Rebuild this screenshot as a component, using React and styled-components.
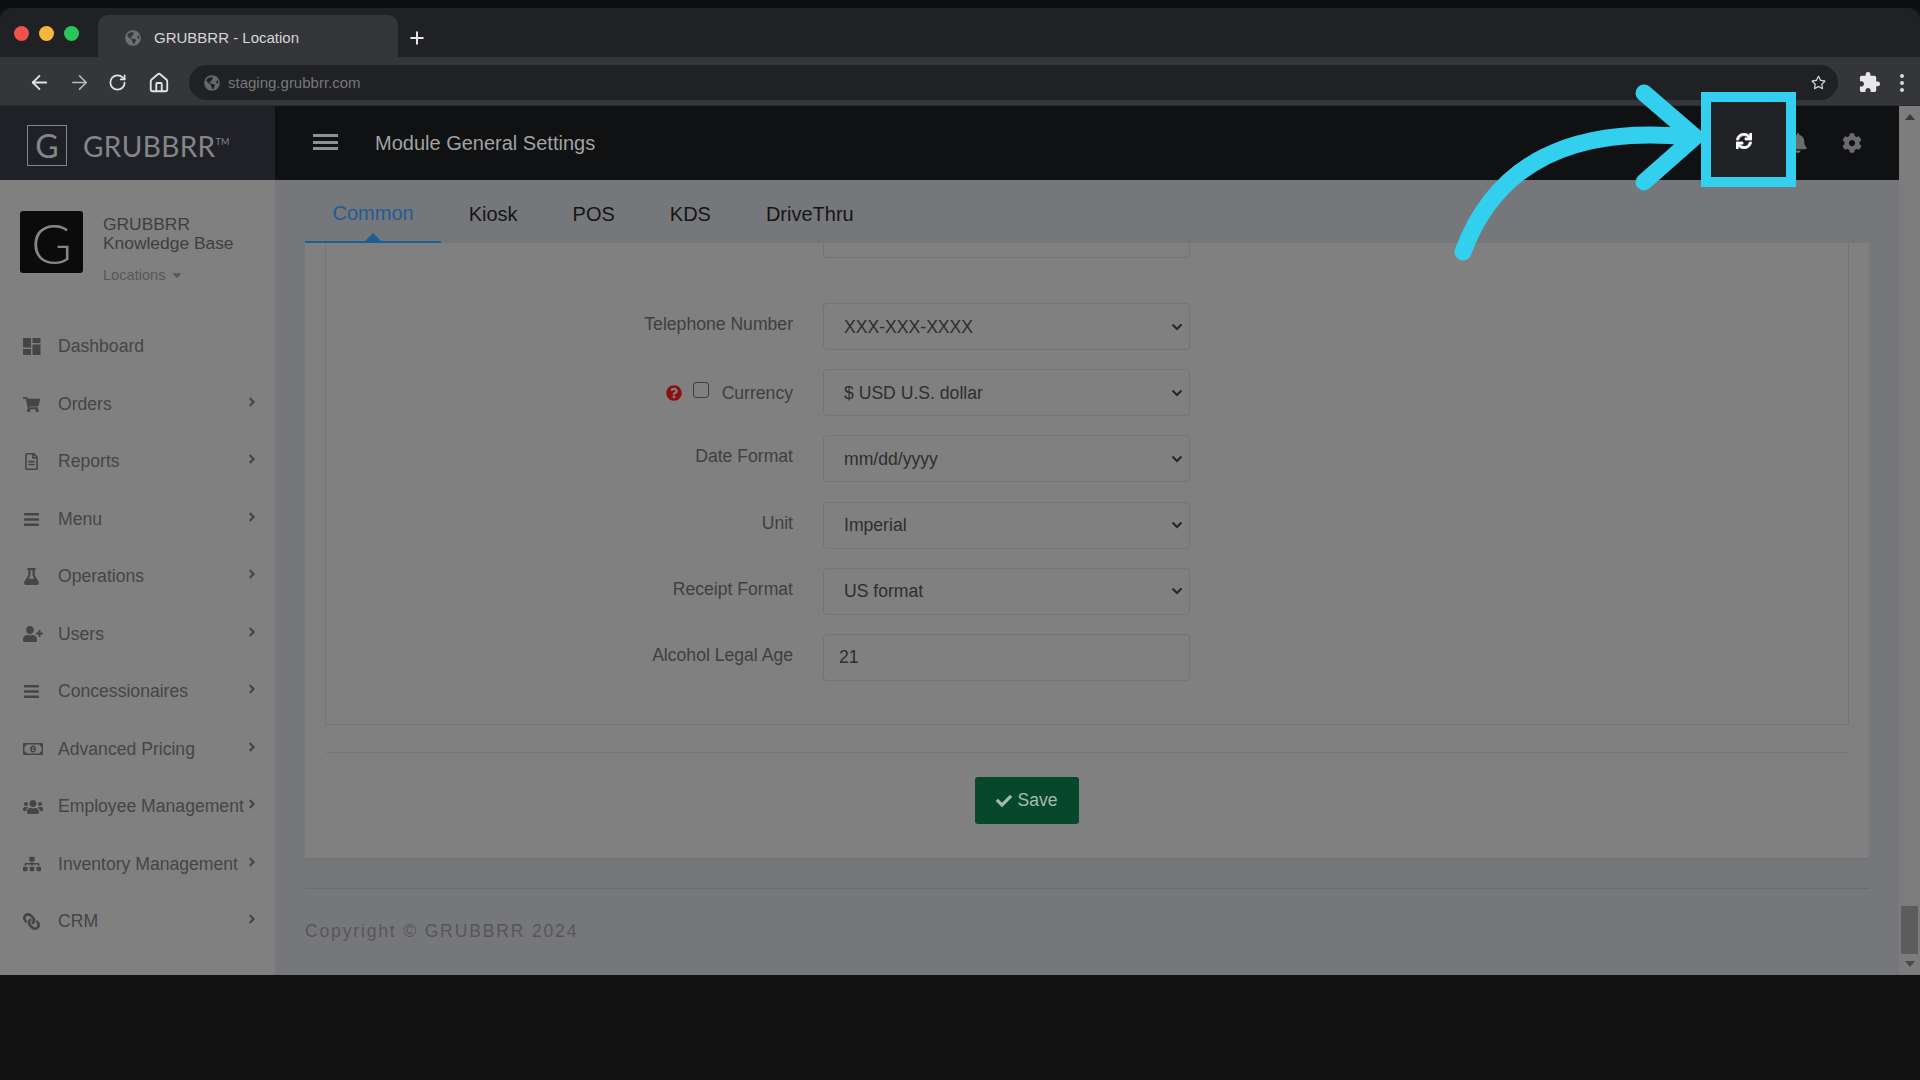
// App.jsx
import React from 'react';
import styled, { createGlobalStyle } from 'styled-components';
import { ArrowLeft, ArrowRight, RotateCw, Home, Plus } from 'lucide-react';
import { MdExtension } from 'react-icons/md';
import {
  FaShoppingCart,
  FaRegFileAlt,
  FaBars,
  FaFlask,
  FaUserPlus,
  FaRegMoneyBillAlt,
  FaUsers,
  FaSitemap,
  FaLink,
  FaAngleRight,
  FaCheck,
  FaQuestionCircle,
  FaSync,
  FaBell,
  FaCog,
  FaRegStar,
  FaGlobeAmericas,
  FaCaretDown,
} from 'react-icons/fa';

const GlobalStyle = createGlobalStyle`
  html, body {
    margin: 0;
    padding: 0;
    background: #111112;
    font-family: "Liberation Sans", Arial, sans-serif;
  }
  * {
    box-sizing: border-box;
  }
`;

const DashboardIcon = () => (
  <svg width="18" height="17" viewBox="0 0 18 17" fill="currentColor">
    <rect x="0" y="0" width="8" height="9.5" />
    <rect x="9.5" y="0" width="8" height="5" />
    <rect x="0" y="11" width="8" height="6" />
    <rect x="9.5" y="6.5" width="8" height="10.5" />
  </svg>
);

const menuItems = [
  { label: 'Dashboard', icon: <DashboardIcon /> },
  { label: 'Orders', icon: <FaShoppingCart size={17} />, more: true },
  { label: 'Reports', icon: <FaRegFileAlt size={17} />, more: true },
  { label: 'Menu', icon: <FaBars size={17} />, more: true },
  { label: 'Operations', icon: <FaFlask size={17} />, more: true },
  { label: 'Users', icon: <FaUserPlus size={20} />, more: true },
  { label: 'Concessionaires', icon: <FaBars size={17} />, more: true },
  { label: 'Advanced Pricing', icon: <FaRegMoneyBillAlt size={20} />, more: true },
  { label: 'Employee Management', icon: <FaUsers size={20} />, more: true },
  { label: 'Inventory Management', icon: <FaSitemap size={18} />, more: true },
  { label: 'CRM', icon: <FlippedLink size={17} />, more: true },
];

const tabs = ['Common', 'Kiosk', 'POS', 'KDS', 'DriveThru'];

const App = () => {
  return (
    <Root>
      <GlobalStyle />
      <TopStrip />

      <TabStrip>
        <TrafficLights>
          <Light color="#ef5350" />
          <Light color="#f6b73c" />
          <Light color="#27c75a" />
        </TrafficLights>
        <BrowserTab>
          <FaGlobeAmericas size={16} color="#6f7073" />
          <span>GRUBBRR - Location</span>
        </BrowserTab>
        <NewTab>
          <Plus size={20} strokeWidth={2.4} />
        </NewTab>
      </TabStrip>

      <Toolbar>
        <NavIcons>
          <ArrowLeft size={23} strokeWidth={1.9} />
          <ArrowRight size={23} strokeWidth={1.7} color="#b9babc" />
          <RotateCw size={19} strokeWidth={2.2} />
          <HomeSlot>
            <Home size={22} strokeWidth={2} />
          </HomeSlot>
        </NavIcons>
        <AddressBar>
          <FaGlobeAmericas size={16} color="#66676a" />
          <AddressText>staging.grubbrr.com</AddressText>
          <FaRegStar size={15} color="#d4d5d6" />
        </AddressBar>
        <Extensions>
          <MdExtension size={23} />
          <Dots>
            <i />
            <i />
            <i />
          </Dots>
        </Extensions>
      </Toolbar>

      <Page>
        <PageBody>
          <Header>
            <LogoArea>
              <LogoBox>G</LogoBox>
              <LogoText>
                GRUBBRR<sup>TM</sup>
              </LogoText>
            </LogoArea>
            <HeaderBar>
              <Hamburger>
                <i />
                <i />
                <i />
              </Hamburger>
              <PageTitle>Module General Settings</PageTitle>
              <HeaderActions>
                <FaBell size={20} />
                <FaCog size={20} />
              </HeaderActions>
            </HeaderBar>
          </Header>

          <Columns>
            <Sidebar>
              <Profile>
                <ProfileLogo>G</ProfileLogo>
                <ProfileInfo>
                  <ProfileName>
                    GRUBBRR
                    <br />
                    Knowledge Base
                  </ProfileName>
                  <Locations>
                    Locations <FaCaretDown size={14} />
                  </Locations>
                </ProfileInfo>
              </Profile>
              <Menu>
                {menuItems.map((item) => (
                  <MenuRow key={item.label}>
                    <MenuIcon>{item.icon}</MenuIcon>
                    <span>{item.label}</span>
                    {item.more && (
                      <MenuMore>
                        <FaAngleRight size={14} />
                      </MenuMore>
                    )}
                  </MenuRow>
                ))}
              </Menu>
            </Sidebar>

            <Main>
              <TabBar>
                {tabs.map((tab, index) => (
                  <TabItem key={tab} $active={index === 0}>
                    {tab}
                  </TabItem>
                ))}
              </TabBar>

              <Card>
                <Fieldset>
                  <CutOffInput />
                  <FormRows>
                    <FormRow>
                      <FieldLabel>Telephone Number</FieldLabel>
                      <Select defaultValue="XXX-XXX-XXXX">
                        <option>XXX-XXX-XXXX</option>
                      </Select>
                    </FormRow>
                    <FormRow>
                      <FieldLabel $low>
                        <FaQuestionCircle size={16} color="#8c0f14" />
                        <Check type="checkbox" />
                        <span>Currency</span>
                      </FieldLabel>
                      <Select defaultValue="$ USD U.S. dollar">
                        <option>$ USD U.S. dollar</option>
                      </Select>
                    </FormRow>
                    <FormRow>
                      <FieldLabel>Date Format</FieldLabel>
                      <Select defaultValue="mm/dd/yyyy">
                        <option>mm/dd/yyyy</option>
                      </Select>
                    </FormRow>
                    <FormRow>
                      <FieldLabel>Unit</FieldLabel>
                      <Select defaultValue="Imperial">
                        <option>Imperial</option>
                      </Select>
                    </FormRow>
                    <FormRow>
                      <FieldLabel>Receipt Format</FieldLabel>
                      <Select defaultValue="US format">
                        <option>US format</option>
                      </Select>
                    </FormRow>
                    <FormRow>
                      <FieldLabel>Alcohol Legal Age</FieldLabel>
                      <TextInput defaultValue="21" />
                    </FormRow>
                  </FormRows>
                </Fieldset>
                <Divider />
                <SaveRow>
                  <SaveButton>
                    <FaCheck size={16} /> Save
                  </SaveButton>
                </SaveRow>
              </Card>

              <Footer>Copyright © GRUBBRR 2024</Footer>
            </Main>
          </Columns>
        </PageBody>

        <Scrollbar>
          <ScrollArrow />
          <ScrollThumb />
          <ScrollArrow $down />
        </Scrollbar>
      </Page>

      <BottomFill />

      <Highlight>
        <RefreshGlyph size={16} />
      </Highlight>
      <CalloutArrow viewBox="0 0 260 190" fill="none">
        <path d="M13 172 C45 85 120 45 240 57" />
        <path d="M194 13 L245 57 L194 102" />
      </CalloutArrow>
    </Root>
  );
};

function FlippedLink({ size }) {
  return (
    <span style={{ display: 'inline-flex', transform: 'scaleX(-1)' }}>
      <FaLink size={size} />
    </span>
  );
}

const Root = styled.div`
  position: relative;
  width: 1920px;
  height: 1080px;
  overflow: hidden;
  display: flex;
  flex-direction: column;
  background: #111112;
`;

const TopStrip = styled.div`
  height: 8px;
  background: #0e0f11;
`;

const TabStrip = styled.div`
  height: 49px;
  background: #202124;
  border-radius: 12px 12px 0 0;
  display: flex;
  align-items: flex-end;
`;

const TrafficLights = styled.div`
  width: 98px;
  height: 100%;
  padding: 18px 0 0 14px;
  display: flex;
  gap: 10px;
`;

const Light = styled.span`
  width: 15px;
  height: 15px;
  border-radius: 50%;
  background: ${(props) => props.color};
`;

const BrowserTab = styled.div`
  width: 300px;
  height: 42px;
  padding: 3px 0 0 27px;
  background: #35363a;
  border-radius: 10px 10px 0 0;
  display: flex;
  align-items: center;
  gap: 13px;
  color: #d6d7d8;
  font-size: 15px;
`;

const NewTab = styled.div`
  width: 38px;
  height: 42px;
  padding-top: 3px;
  color: #e6e6e7;
  display: flex;
  align-items: center;
  justify-content: center;
`;

const Toolbar = styled.div`
  height: 48px;
  padding-top: 8px;
  background: #35363a;
  display: flex;
  align-items: flex-start;
`;

const NavIcons = styled.div`
  width: 189px;
  height: 35px;
  padding: 0 0 0 28px;
  display: flex;
  align-items: center;
  gap: 17px;
  color: #e2e3e4;
`;

const HomeSlot = styled.span`
  margin-left: 4px;
  display: flex;
`;

const AddressBar = styled.div`
  width: 1649px;
  height: 35px;
  padding: 0 12px 0 15px;
  border-radius: 18px;
  background: #202124;
  display: flex;
  align-items: center;
  gap: 8px;
`;

const AddressText = styled.span`
  flex: 1;
  color: #77787b;
  font-size: 15px;
`;

const Extensions = styled.div`
  flex: 1;
  height: 35px;
  padding-left: 20px;
  display: flex;
  align-items: center;
  gap: 19px;
  color: #e8e8e9;
`;

const Dots = styled.div`
  display: flex;
  flex-direction: column;
  gap: 3px;

  i {
    display: block;
    width: 4px;
    height: 4px;
    border-radius: 50%;
    background: #d8d8d9;
  }
`;

const Page = styled.div`
  height: 870px;
  display: flex;
  background: #76777b;
  border-top: 1px solid #2c2d30;
`;

const PageBody = styled.div`
  width: 1899px;
  display: flex;
  flex-direction: column;
`;

const Header = styled.header`
  height: 74px;
  display: flex;
  flex-shrink: 0;
`;

const LogoArea = styled.div`
  width: 275px;
  padding: 5px 0 0 27px;
  background: #1f2126;
  display: flex;
  align-items: center;
  gap: 16px;
`;

const LogoBox = styled.div`
  width: 40px;
  height: 41px;
  border: 1.5px solid #85868a;
  color: #85868a;
  font-family: Lato, sans-serif;
  font-size: 32px;
  display: flex;
  align-items: center;
  justify-content: center;
`;

const LogoText = styled.div`
  color: #85868a;
  font-family: Lato, sans-serif;
  font-size: 28px;
  letter-spacing: 0.4px;

  sup {
    font-size: 9px;
    letter-spacing: 0;
    vertical-align: 12px;
    line-height: 0;
  }
`;

const HeaderBar = styled.div`
  flex: 1;
  padding: 0 37px 0 38px;
  background: #101113;
  display: flex;
  align-items: center;
`;

const Hamburger = styled.div`
  width: 25px;
  display: flex;
  flex-direction: column;
  gap: 3.5px;
  margin-top: -2px;

  i {
    display: block;
    height: 3px;
    background: #8f9092;
  }
`;

const PageTitle = styled.h1`
  margin: 0 0 0 37px;
  color: #a2a2a2;
  font-size: 20px;
  font-weight: 400;
`;

const HeaderActions = styled.div`
  margin-left: auto;
  display: flex;
  align-items: center;
  gap: 34px;
  color: #6c6c6f;
`;

const Columns = styled.div`
  flex: 1;
  display: flex;
  min-height: 0;
`;

const Sidebar = styled.aside`
  width: 275px;
  flex-shrink: 0;
  background: #808080;
`;

const Profile = styled.div`
  height: 138px;
  padding: 31px 0 0 20px;
  display: flex;
  gap: 20px;
`;

const ProfileLogo = styled.div`
  width: 63px;
  height: 62px;
  border-radius: 3px;
  background: #0b0b0c;
  color: #858585;
  font-family: Lato, sans-serif;
  font-size: 56px;
  font-weight: 300;
  display: flex;
  align-items: center;
  justify-content: center;
`;

const ProfileInfo = styled.div`
  padding-top: 4px;
`;

const ProfileName = styled.div`
  color: #3e3e3e;
  font-size: 17.4px;
  line-height: 19px;
`;

const Locations = styled.div`
  margin-top: 14px;
  color: #575757;
  font-size: 14.6px;
  display: flex;
  align-items: center;
  gap: 5px;
`;

const Menu = styled.nav`
  display: flex;
  flex-direction: column;
`;

const MenuRow = styled.div`
  height: 57.5px;
  padding: 0 16px 0 22px;
  display: flex;
  align-items: center;
  color: #454545;
  font-size: 17.6px;
`;

const MenuIcon = styled.span`
  width: 36px;
  padding-left: 1px;
  display: flex;
  align-items: center;
`;

const MenuMore = styled.span`
  margin-left: auto;
  margin-top: -5px;
  display: flex;
`;

const Main = styled.main`
  flex: 1;
  padding: 0 30px;
  display: flex;
  flex-direction: column;
`;

const TabBar = styled.div`
  height: 63px;
  flex-shrink: 0;
  display: flex;
`;

const TabItem = styled.div`
  position: relative;
  padding: 5px 27.5px 0;
  display: flex;
  align-items: center;
  font-size: 20px;
  color: ${(props) => (props.$active ? '#1f5c93' : '#151515')};
  border-bottom: ${(props) => (props.$active ? '2px solid #1a5f96' : '0')};

  &::after {
    content: '';
    display: ${(props) => (props.$active ? 'block' : 'none')};
    position: absolute;
    left: 50%;
    bottom: 0;
    margin-left: -8px;
    border: 8px solid transparent;
    border-top: 0;
    border-bottom-color: #1a5f96;
  }
`;

const Card = styled.section`
  height: 616px;
  flex-shrink: 0;
  padding: 0 20px;
  background: #808080;
  border-bottom: 1px solid #707072;
`;

const Fieldset = styled.div`
  height: 482px;
  border: 1px solid #757575;
  border-top: 0;
`;

const CutOffInput = styled.div`
  width: 367px;
  height: 15px;
  margin-left: 497px;
  border: 1px solid #747474;
  border-top: 0;
  border-radius: 0 0 4px 4px;
`;

const FormRows = styled.div`
  margin-top: 45px;
  display: flex;
  flex-direction: column;
  gap: 19.2px;
`;

const FormRow = styled.div`
  height: 47px;
  display: flex;
`;

const FieldLabel = styled.label`
  width: 467px;
  height: 100%;
  padding-top: ${(props) => (props.$low ? '14px' : '11px')};
  display: flex;
  align-items: flex-start;
  justify-content: flex-end;
  color: #3f3f3f;
  font-size: 17.6px;
  line-height: 20px;

  svg {
    margin-top: 2px;
  }

  & > span {
    margin-left: 13px;
  }
`;

const Check = styled.input`
  width: 16px;
  height: 16px;
  margin: -1px 0 0 11px;
  appearance: none;
  border: 1px solid #3e3e3e;
  border-radius: 3px;
  background: #808080;
`;

const Select = styled.select`
  width: 367px;
  height: 47px;
  margin-left: 30px;
  padding: 0 0 0 20px;
  border: 1px solid #747474;
  border-radius: 4px;
  appearance: none;
  background-color: #808080;
  background-image: url("data:image/svg+xml,%3Csvg xmlns='http://www.w3.org/2000/svg' width='12' height='8' viewBox='0 0 12 8'%3E%3Cpath d='M1.5 1.5L6 6l4.5-4.5' fill='none' stroke='%23262626' stroke-width='2'/%3E%3C/svg%3E");
  background-repeat: no-repeat;
  background-position: right 6px center;
  color: #2e2e2e;
  font-family: inherit;
  font-size: 17.6px;
`;

const TextInput = styled.input`
  width: 367px;
  height: 47px;
  margin-left: 30px;
  padding: 0 15px;
  border: 1px solid #747474;
  border-radius: 4px;
  background: #808080;
  color: #2e2e2e;
  font-family: inherit;
  font-size: 17.6px;
`;

const Divider = styled.hr`
  margin: 27px 0 24px;
  border: 0;
  border-top: 1px solid #777778;
`;

const SaveRow = styled.div`
  display: flex;
  padding-left: 650px;
`;

const SaveButton = styled.button`
  width: 104px;
  height: 47px;
  border: 0;
  border-radius: 3px;
  background: #07482a;
  color: #a9b8ae;
  font-family: inherit;
  font-size: 17.6px;
  display: flex;
  align-items: center;
  justify-content: center;
  gap: 5px;
`;

const Footer = styled.footer`
  margin-top: 29px;
  padding-top: 32px;
  border-top: 1px solid #6a6b6e;
  color: #565659;
  font-size: 17.6px;
  letter-spacing: 1.8px;
`;

const Scrollbar = styled.div`
  flex: 1;
  background: #7c7c7c;
  display: flex;
  flex-direction: column;
  align-items: center;
  padding: 8px 0 8px;
`;

const ScrollArrow = styled.span`
  width: 0;
  height: 0;
  border-left: 5px solid transparent;
  border-right: 5px solid transparent;
  border-bottom: ${(props) => (props.$down ? '0' : '6px solid #3a3a3b')};
  border-top: ${(props) => (props.$down ? '6px solid #4a4a4b' : '0')};
`;

const ScrollThumb = styled.div`
  width: 17px;
  height: 48px;
  margin: auto 0 7px;
  background: #5c5c5c;
`;

const BottomFill = styled.div`
  flex: 1;
  background: #111112;
`;

const Highlight = styled.div`
  position: absolute;
  left: 1701px;
  top: 92px;
  width: 95px;
  height: 95px;
  padding: 3px 9px 0 0;
  border: 10px solid #33cfee;
  background: #202226;
  display: flex;
  align-items: center;
  justify-content: center;
`;

const RefreshGlyph = styled(FaSync)`
  color: #ffffff;
  stroke: #ffffff;
  stroke-width: 24px;
`;

const CalloutArrow = styled.svg`
  position: absolute;
  left: 1450px;
  top: 80px;
  width: 260px;
  height: 190px;

  path {
    stroke: #33cfee;
    stroke-width: 17px;
    stroke-linecap: round;
    stroke-linejoin: round;
  }
`;

export default App;
